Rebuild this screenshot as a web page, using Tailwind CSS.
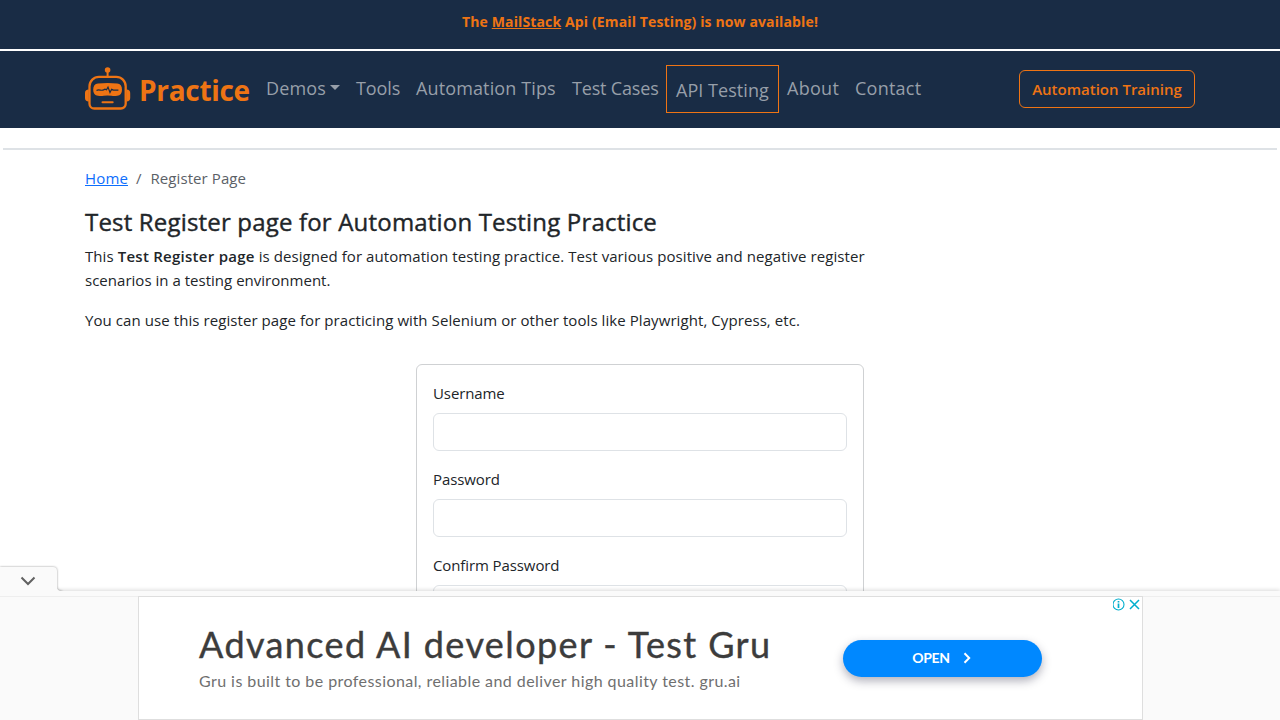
<!DOCTYPE html>
<html lang="en">
<head>
<meta charset="utf-8">
<title>Test Register page for Automation Testing Practice</title>
<script src="https://cdn.jsdelivr.net/npm/@tailwindcss/browser@4"></script>
</head>
<body class="h-[720px] overflow-hidden bg-white font-['Open_Sans',sans-serif] text-[15px] leading-6 text-[#212529]">
  <div class="flex h-[49px] justify-center bg-[#192c45] pt-[10px] text-[14px] font-bold tracking-[0.13px] whitespace-pre text-[#ee7414]">The <a class="underline">MailStack</a> Api (Email Testing) is now available!</div>
  <nav class="mt-[2px] h-[77px] bg-[#192c45]">
    <div class="mx-auto flex w-[1110px] items-start">
      <a class="mt-4 flex w-[165px] items-start text-[#ee7414]">
        <svg class="h-[44px] w-[46px] shrink-0" viewBox="0 0 46 44" fill="none" stroke="currentColor">
          <circle cx="22.6" cy="3" r="2.8" fill="currentColor" stroke="none"/>
          <path d="M22.6 5v6" stroke-width="2"/>
          <path d="M14 9.8h17.2a9.5 9.5 0 0 1 9.5 9.5v17.400a4.800 4.800 0 0 1-4.800 4.800H9.300a4.800 4.800 0 0 1-4.800-4.800V19.300A9.500 9.500 0 0 1 14 9.800z" stroke-width="2.300"/>
          <path d="M3.800 22.500v12C1.200 34.500 0 33 0 31v-5c0-2 1.200-3.500 3.800-3.500zM41.400 22.500v12c2.600 0 3.800-1.500 3.800-3.500v-5c0-2-1.200-3.500-3.800-3.500z" fill="currentColor" stroke="none"/>
          <path d="M13 16.500Q22.600 15.500 32.200 16.500Q37 17 37 22.700Q37 28.300 32.200 28.800Q29 29.300 26.500 28.800Q22.600 28 18.700 28.800Q16.200 29.300 13 28.800Q8.200 28.300 8.200 22.700Q8.200 17 13 16.500z" fill="currentColor" stroke="none"/>
          <path d="M11.500 23.500c2.500-1.600 4.500.6 7-.6l1.500-.8 1.500.6 1.500-2.600 2 5.400 1.600-3.200 1.800.8h5" stroke="#192c45" stroke-width="1.200"/>
          <path d="M17.500 35.200h10.200" stroke-width="2" stroke-linecap="round"/>
        </svg>
        <span class="ml-2 pt-px text-[28px] leading-[44px] font-bold tracking-[-0.3px]">Practice</span>
      </a>
      <div class="ml-2 flex items-start pt-[14px] text-[18px] leading-[27px] whitespace-nowrap text-[#979fa9] *:mt-[10px]">
        <a class="flex w-[90px] items-center px-2 tracking-[0.15px]">Demos<span class="-mt-0.5 ml-1 border-x-[5px] border-t-[5px] border-x-transparent border-t-current"></span></a>
        <a class="w-[60px] px-2 tracking-[-0.1px]">Tools</a>
        <a class="w-[156px] px-2 tracking-[0.13px]">Automation Tips</a>
        <a class="w-[102px] px-2 tracking-[-0.17px]">Test Cases</a>
        <a class="mt-0! h-12 w-[113px] border border-[#ee7414] px-2 pt-[11px] pl-[9px] tracking-[0.05px]">API Testing</a>
        <a class="w-[68px] px-2 tracking-[0.3px]">About</a>
        <a class="px-2 tracking-[0.25px]">Contact</a>
      </div>
      <a class="mt-[19px] ml-auto flex h-[38px] w-[176px] items-center justify-center rounded-md border border-[#ee7414] font-semibold text-[#ee7414]">Automation Training</a>
    </div>
  </nav>
  <hr class="mx-[3px] mt-5 border-t-2 border-[#dee2e6]">
  <main class="mx-auto w-[1110px] pt-4">
    <div class="flex gap-2 text-[#5b6167]"><a class="tracking-[0.15px] text-[#0d6efd] underline">Home</a><span class="mr-px">/</span><span class="tracking-[0.08px]">Register Page</span></div>
    <h1 class="mt-[17px] text-[24px] leading-[29px] font-medium tracking-[0.18px] [-webkit-text-stroke:0.4px]">Test Register page for Automation Testing Practice</h1>
    <p class="mt-2 tracking-[0.07px]">This <b class="font-semibold tracking-[0.27px]">Test Register page</b> is designed for automation testing practice. Test various positive and negative register<br><span class="tracking-[0.02px]">scenarios in a testing environment.</span></p>
    <p class="mt-4 tracking-[0.077px]">You can use this register page for practicing with Selenium or other tools like Playwright, Cypress, etc.</p>
    <form class="mx-auto mt-8 w-[448px] rounded-md border border-[#cfd1d3] px-4 pt-4 pb-4 tracking-[-0.1px]">
      <label class="block">Username</label>
      <div class="mt-2 mb-4 h-[38px] rounded-md border border-[#dee2e6]"></div>
      <label class="block">Password</label>
      <div class="mt-2 mb-4 h-[38px] rounded-md border border-[#dee2e6]"></div>
      <label class="block">Confirm Password</label>
      <div class="mt-2 h-[38px] rounded-md border border-[#dee2e6]"></div>
    </form>
  </main>
  <aside class="fixed inset-x-0 bottom-0 h-[129px] bg-[#fafafa] shadow-[0_-1px_4px_rgba(0,0,0,0.15)]">
    <div class="absolute -top-[27px] left-0 h-[27px] w-[66px] overflow-hidden pt-[2px]">
      <svg class="h-[28px] w-[64px] drop-shadow-[0_0_1px_rgba(0,0,0,0.4)]" viewBox="0 0 64 28"><path d="M0 1h53q4 0 4 4v16q0 4 5 4v3H0z" fill="#fafafa"/><path d="M21.500 11.500l6.500 6.500 6.500-6.500" fill="none" stroke="#616161" stroke-width="2"/></svg>
    </div>
    <div class="h-[6px] border-b border-[#eeeeee]"></div>
    <div class="relative -mt-px ml-[138px] flex h-[124px] w-[1005px] border border-[#dedede] bg-white pl-[60px]">
      <div class="w-[644px] font-[Lato,sans-serif] whitespace-nowrap">
        <div class="pt-[25px] text-[36px] leading-[44px] tracking-[1.4px] text-[#3c3c3c] [-webkit-text-stroke:0.4px]">Advanced AI developer - Test Gru</div>
        <div class="mt-[3px] text-[16px] leading-6 tracking-[0.43px] text-[#6f6f6f]">Gru is built to be professional, reliable and deliver high quality test. gru.ai</div>
      </div>
      <a class="mt-[43px] flex h-[37px] w-[199px] items-center justify-center gap-[13px] rounded-full bg-[#0088ff] pr-0.5 pb-0.5 font-[Lato,sans-serif] text-[14px] font-bold tracking-[-0.3px] text-white shadow-[0_4px_10px_rgba(30,30,60,0.35)]">OPEN<svg class="h-3 w-2" viewBox="0 0 8 12" fill="none" stroke="currentColor" stroke-width="2"><path d="M1.500 1.200L6.200 6l-4.700 4.800"/></svg></a>
      <svg class="absolute top-0 right-0 h-[14px] w-[29px]" viewBox="0 0 29 14" fill="none" stroke="#00aecd"><circle cx="5.500" cy="7.500" r="5.500" stroke-width="1.100"/><path d="M5.500 6.500v4.500M5.500 4v1.400" stroke-width="1.700"/><path d="M17 3l9 9M26 3l-9 9" stroke-width="1.500"/></svg>
    </div>
  </aside>
</body>
</html>
